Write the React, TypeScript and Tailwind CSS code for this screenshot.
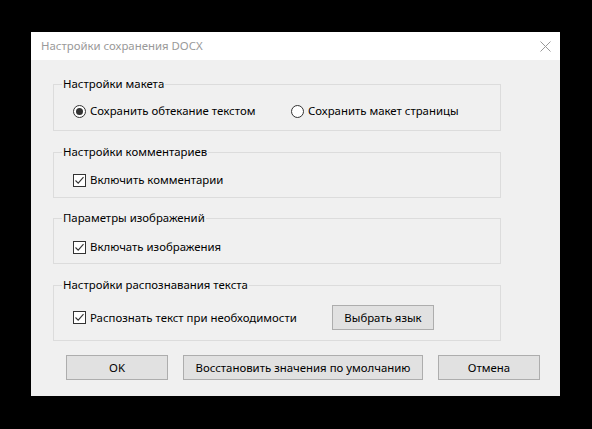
import React from 'react';

const font = { fontFamily: '"Noto Sans", "Open Sans", sans-serif' };

function Radio({ checked }: { checked: boolean }) {
  return (
    <span className="flex h-[13px] w-[13px] shrink-0 items-center justify-center rounded-full border border-[#333] bg-white">
      {checked && <span className="h-[7px] w-[7px] rounded-full bg-[#333]" />}
    </span>
  );
}

function Check() {
  return (
    <span className="flex h-[13px] w-[13px] shrink-0 items-center justify-center border border-[#333] bg-white">
      <svg width="11" height="11" viewBox="0 0 11 11">
        <path d="M1.5 5.5 L4.2 8.2 L9.5 2.2" fill="none" stroke="#333" strokeWidth="1.1" />
      </svg>
    </span>
  );
}

function Group({ title, className, children }: { title: string; className: string; children: React.ReactNode }) {
  return (
    <fieldset className={'w-[448px] border border-[#dcdcdc] pl-[19px] ' + className}>
      <legend className="ml-[-11px] px-[1px] text-[11.4px] leading-[16px] text-black">{title}</legend>
      {children}
    </fieldset>
  );
}

function Button({ label, w }: { label: string; w: string }) {
  return (
    <button className={'flex h-[25px] items-center justify-center border border-[#adadad] bg-[#e1e1e1] text-[11.4px] text-black ' + w}>
      {label}
    </button>
  );
}

export default function App() {
  return (
    <div className="h-[429px] w-[592px] bg-black pl-[31px] pt-[32px]" style={font}>
      <div className="flex h-[364px] w-[529px] flex-col bg-[#f0f0f0]">
        <div className="flex h-[28px] items-center justify-between bg-white pl-[10px] pr-[9px]">
          <span className="text-[11.4px] text-[#999]">Настройки сохранения DOCX</span>
          <svg width="11" height="11" viewBox="0 0 11 11">
            <path d="M0.5 0.5 L10.5 10.5 M10.5 0.5 L0.5 10.5" stroke="#999" strokeWidth="1" />
          </svg>
        </div>
        <div className="flex flex-col pl-[22px] pt-[16px]">
          <Group title="Настройки макета" className="h-[55px] pt-[11px]">
            <div className="flex items-center text-[11.4px] leading-[16px]">
              <label className="flex w-[218px] items-center gap-[4px]">
                <Radio checked={true} />
                Сохранить обтекание текстом
              </label>
              <label className="flex items-center gap-[4px]">
                <Radio checked={false} />
                Сохранить макет страницы
              </label>
            </div>
          </Group>
          <Group title="Настройки комментариев" className="mt-[13px] h-[54px] pt-[12px]">
            <label className="flex items-center gap-[4px] text-[11.4px] leading-[16px]">
              <Check />
              Включить комментарии
            </label>
          </Group>
          <Group title="Параметры изображений" className="mt-[12px] h-[54px] pt-[13px]">
            <label className="flex items-center gap-[4px] text-[11.4px] leading-[16px]">
              <Check />
              Включать изображения
            </label>
          </Group>
          <Group title="Настройки распознавания текста" className="mt-[13px] h-[64px] pt-[12px]">
            <div className="flex items-center text-[11.4px] leading-[16px]">
              <label className="flex w-[259px] items-center gap-[4px]">
                <Check />
                Распознать текст при необходимости
              </label>
              <Button label="Выбрать язык" w="w-[102px]" />
            </div>
          </Group>
          <div className="mt-[14px] flex gap-[15px] pl-[13px]">
            <Button label="OK" w="w-[102px]" />
            <Button label="Восстановить значения по умолчанию" w="w-[240px]" />
            <Button label="Отмена" w="w-[102px]" />
          </div>
        </div>
      </div>
    </div>
  );
}
